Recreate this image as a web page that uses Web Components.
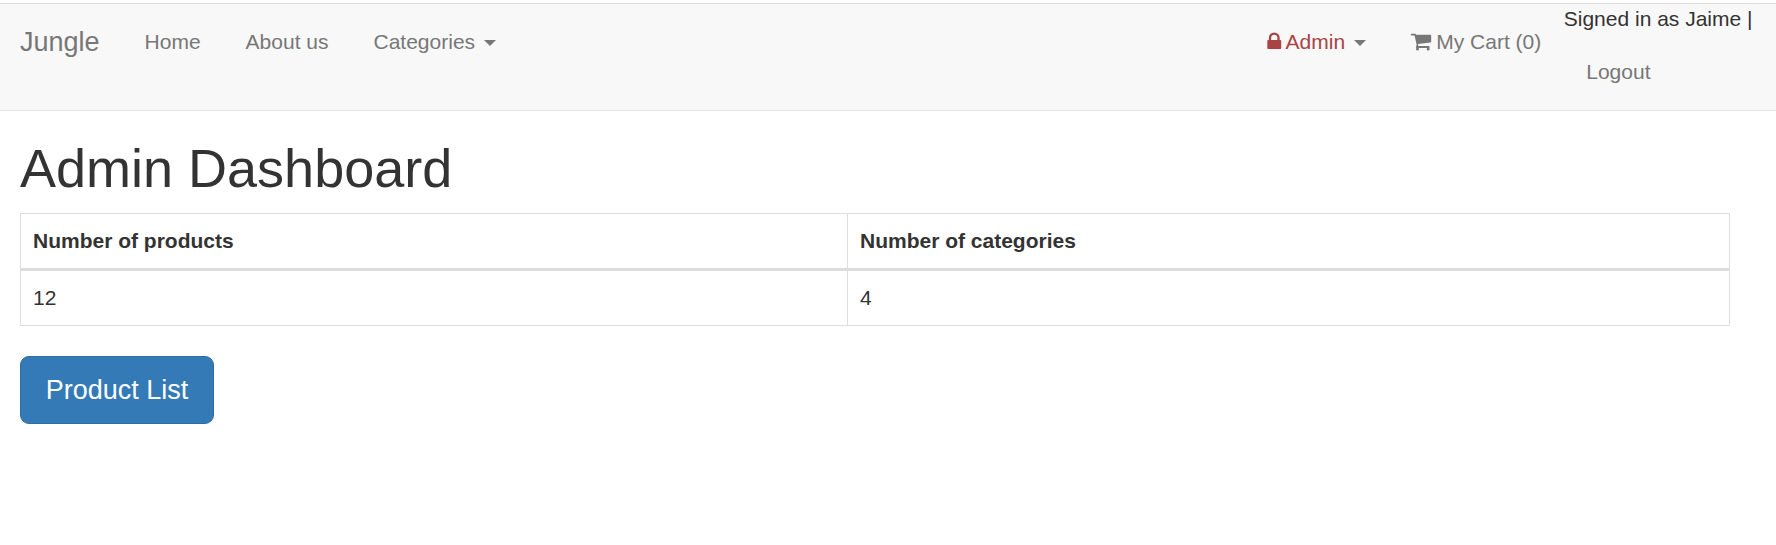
<!DOCTYPE html>
<html lang="en">
<head>
<meta charset="utf-8">
<title>Jungle</title>
<style>
body{margin:0;background:#fff;color:#333;font:21px/30px "Liberation Sans",Arial,sans-serif;min-height:545px}
main{display:block;padding:28px 46px 0 20px}
</style>
</head>
<body>
<site-nav>
  <nav-link>Home</nav-link>
  <nav-link>About us</nav-link>
  <nav-link caret>Categories</nav-link>
  <nav-link slot="end" icon="lock" caret>Admin</nav-link>
  <nav-link slot="end" icon="cart">My Cart (0)</nav-link>
  <user-status slot="end" name="Jaime"></user-status>
</site-nav>
<main>
  <page-title>Admin Dashboard</page-title>
  <stats-table></stats-table>
  <action-button>Product List</action-button>
</main>
<script>
const define = (name, html, setup) => customElements.define(name, class extends HTMLElement {
  connectedCallback() {
    if (this.shadowRoot) return;
    this.attachShadow({mode: 'open'}).innerHTML = html;
    if (setup) setup(this, this.shadowRoot);
  }
});

// Each icon: width in px, and a path on a 21px-high box whose baseline is at y=18.
const icons = {
  lock: [13.5, '<path transform="translate(.3 18) scale(.0121 -.0118)" d="M320 768h512v192q0 106-75 181t-181 75-181-75-75-181v-192zM1152 672v-576q0-40-28-68t-68-28h-960q-40 0-68 28t-28 68v576q0 40 28 68t68 28h32v192q0 184 132 316t316 132 316-132 132-316v-192h32q40 0 68-28t28-68z"/>'],
  cart: [19.5, '<path d="M.6 2.700h3.400q.8 0 1.200 1.100h14.200q.8 0 .8.8v6q0 .8-.8.900L7 12.900l.3 1.300q0 .4-.2.700H17.700q1 0 1 1t-1 1H5.900q-1 0-1-1 0-.5.8-1.900L3.600 4.400H.6Q-.2 4.400-.2 3.500T.6 2.700z"/><circle cx="6.500" cy="18" r="1.500"/><circle cx="17.200" cy="18" r="1.500"/>']
};

define('site-nav', `<style>
:host{display:block;padding-top:3px}
nav{display:flex;box-sizing:border-box;height:108px;background:#f8f8f8;border-top:1px solid #dcdcdc;border-bottom:1px solid #e7e7e7;padding-left:20px;color:#777}
.brand{font-size:27px;padding:22.5px 22.5px 0 0}
.group{display:flex;align-items:flex-start}
.end{margin-left:auto;padding-right:23.5px}
</style><nav><span class="brand">Jungle</span><div class="group"><slot></slot></div><div class="group end"><slot name="end"></slot></div></nav>`);

define('nav-link', `<style>
:host{display:block;padding:22.5px;white-space:nowrap}
:host([icon="lock"]) .label{color:#a94442}
svg{height:21px;fill:currentColor;vertical-align:-3px;overflow:visible}
.caret{display:inline-block;margin-left:3px;vertical-align:middle;border:6px solid transparent;border-top-color:currentColor;border-bottom:0}
</style><span class="label"><span class="icon"></span><slot></slot></span>`, (host, root) => {
  const icon = icons[host.getAttribute('icon')];
  if (icon) root.querySelector('.icon').innerHTML = `<svg width="${icon[0]}" viewBox="0 0 ${icon[0]} 21">${icon[1]}</svg> `;
  if (host.hasAttribute('caret')) root.querySelector('.label').insertAdjacentHTML('afterend', ' <b class="caret"></b>');
});

define('user-status', `<style>
:host{display:block;color:#333;white-space:nowrap}
a{display:block;padding:23px 22.5px 0;color:#777}
</style><div></div><a>Logout</a>`, (host, root) => {
  root.querySelector('div').textContent = `Signed in as ${host.getAttribute('name')} |`;
});

define('page-title', `<style>
:host{display:block}
h1{margin:0 0 15px;font-size:54px;font-weight:400;line-height:59px}
</style><h1><slot></slot></h1>`);

define('stats-table', `<style>
:host{display:block;margin-bottom:30px}
.grid{display:grid;grid-template-columns:826px 1fr;border:1px solid #ddd}
.grid>div{padding:12px}
.grid>div:nth-child(even){border-left:1px solid #ddd}
.grid>.head{font-weight:700;border-bottom:3px solid #ddd}
</style><div class="grid">
<div class="head">Number of products</div><div class="head">Number of categories</div>
<div>12</div><div>4</div></div>`);

define('action-button', `<style>
:host{display:block}
button{display:block;box-sizing:border-box;height:68px;width:194px;padding:0 0 1px;font:27px/36px "Liberation Sans",Arial,sans-serif;color:#fff;background:#337ab7;border:1px solid #2e6da4;border-radius:9px}
</style><button><slot></slot></button>`);
</script>
</body>
</html>
